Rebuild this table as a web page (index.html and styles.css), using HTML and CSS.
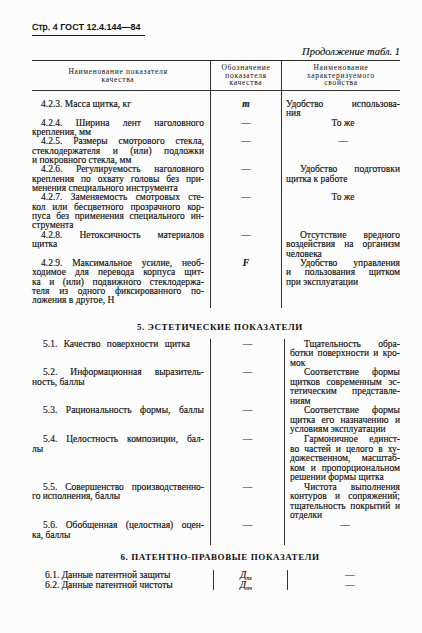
FILE: index.html
```html
<!DOCTYPE html>
<html lang="ru">
<head>
<meta charset="utf-8">
<title>ГОСТ 12.4.144—84, стр. 4</title>
<link rel="stylesheet" href="styles.css">
</head>
<body>
<div class="page">
  <div class="runhead"><span>Стр. 4</span> ГОСТ 12.4.144—84</div>
  <div class="cont">Продолжение табл. 1</div>

  <div class="thead">
    <div class="th th1"><span>Наименование показателя</span><span>качества</span></div>
    <div class="th th2"><span>Обозначение</span><span>показателя</span><span>качества</span></div>
    <div class="th th3"><span>Наименование</span><span>характеризуемого</span><span>свойства</span></div>
  </div>

  <div class="tbody s4">
    <div class="row">
      <div class="c1"><span class="l i">4.2.3. Масса щитка, кг</span></div>
      <div class="c2"><span class="l sym">m</span></div>
      <div class="c3"><span class="l j">Удобство использова-</span><span class="l">ния</span></div>
    </div>
    <div class="row">
      <div class="c1"><span class="l i j">4.2.4. Ширина лент наголовного</span><span class="l">крепления, мм</span></div>
      <div class="c2"><span class="l">—</span></div>
      <div class="c3"><span class="l ctr">То же</span></div>
    </div>
    <div class="row">
      <div class="c1"><span class="l i j">4.2.5. Размеры смотрового стекла,</span><span class="l j">стеклодержателя и (или) подложки</span><span class="l">и покровного стекла, мм</span></div>
      <div class="c2"><span class="l">—</span></div>
      <div class="c3"><span class="l ctr">—</span></div>
    </div>
    <div class="row">
      <div class="c1"><span class="l i j">4.2.6. Регулируемость наголовного</span><span class="l j">крепления по охвату головы без при-</span><span class="l">менения специального инструмента</span></div>
      <div class="c2"><span class="l">—</span></div>
      <div class="c3"><span class="l i3 j">Удобство подготовки</span><span class="l">щитка к работе</span></div>
    </div>
    <div class="row">
      <div class="c1"><span class="l i j">4.2.7. Заменяемость смотровых сте-</span><span class="l j">кол или бесцветного прозрачного кор-</span><span class="l j">пуса без применения специального ин-</span><span class="l">струмента</span></div>
      <div class="c2"><span class="l">—</span></div>
      <div class="c3"><span class="l ctr">То же</span></div>
    </div>
    <div class="row">
      <div class="c1"><span class="l i j">4.2.8. Нетоксичность материалов</span><span class="l">щитка</span></div>
      <div class="c2"><span class="l">—</span></div>
      <div class="c3"><span class="l i3 j">Отсутствие вредного</span><span class="l j">воздействия на организм</span><span class="l">человека</span></div>
    </div>
    <div class="row">
      <div class="c1"><span class="l i j">4.2.9. Максимальное усилие, необ-</span><span class="l j">ходимое для перевода корпуса щит-</span><span class="l j">ка и (или) подвижного стеклодержа-</span><span class="l j">теля из одного фиксированного по-</span><span class="l">ложения в другое, Н</span></div>
      <div class="c2"><span class="l sym">F</span></div>
      <div class="c3"><span class="l i3 j">Удобство управления</span><span class="l j">и пользования щитком</span><span class="l">при эксплуатации</span></div>
    </div>
  </div>

  <h2 class="sect s5h">5. ЭСТЕТИЧЕСКИЕ ПОКАЗАТЕЛИ</h2>

  <div class="tbody s5">
    <div class="row">
      <div class="c1"><span class="l i5 ws">5.1. Качество поверхности щитка</span></div>
      <div class="c2"><span class="l">—</span></div>
      <div class="c3"><span class="l i3 j">Тщательность обра-</span><span class="l j">ботки поверхности и кро-</span><span class="l">мок</span></div>
    </div>
    <div class="row">
      <div class="c1"><span class="l i5 j">5.2. Информационная выразитель-</span><span class="l">ность, баллы</span></div>
      <div class="c2"><span class="l">—</span></div>
      <div class="c3"><span class="l i3 j">Соответствие формы</span><span class="l j">щитков современным эс-</span><span class="l j">тетическим представле-</span><span class="l">ниям</span></div>
    </div>
    <div class="row">
      <div class="c1"><span class="l i5 j">5.3. Рациональность формы, баллы</span></div>
      <div class="c2"><span class="l">—</span></div>
      <div class="c3"><span class="l i3 j">Соответствие формы</span><span class="l j">щитка его назначению и</span><span class="l">условиям эксплуатации</span></div>
    </div>
    <div class="row">
      <div class="c1"><span class="l i5 j">5.4. Целостность композиции, бал-</span><span class="l">лы</span></div>
      <div class="c2"><span class="l">—</span></div>
      <div class="c3"><span class="l i3 j">Гармоничное единст-</span><span class="l j">во частей и целого в ху-</span><span class="l j">дожественном, масштаб-</span><span class="l j">ком и пропорциональном</span><span class="l">решении формы щитка</span></div>
    </div>
    <div class="row">
      <div class="c1"><span class="l i5 j">5.5. Совершенство производственно-</span><span class="l">го исполнения, баллы</span></div>
      <div class="c2"><span class="l">—</span></div>
      <div class="c3"><span class="l i3 j">Чистота выполнения</span><span class="l j">контуров и сопряжений;</span><span class="l j">тщательность покрытий и</span><span class="l">отделки</span></div>
    </div>
    <div class="row">
      <div class="c1"><span class="l i5 j">5.6. Обобщенная (целостная) оцен-</span><span class="l">ка, баллы</span></div>
      <div class="c2"><span class="l">—</span></div>
      <div class="c3"><span class="l ctr">—</span></div>
    </div>
  </div>

  <h2 class="sect s6h">6. ПАТЕНТНО-ПРАВОВЫЕ ПОКАЗАТЕЛИ</h2>

  <div class="tbody s6">
    <div class="row">
      <div class="c1"><span class="l i6">6.1. Данные патентной защиты</span></div>
      <div class="c2"><span class="l sym6">Д<sub>пз</sub></span></div>
      <div class="c3"><span class="l d6">—</span></div>
    </div>
    <div class="row">
      <div class="c1"><span class="l i6">6.2. Данные патентной чистоты</span></div>
      <div class="c2"><span class="l sym6">Д<sub>пч</sub></span></div>
      <div class="c3"><span class="l d6">—</span></div>
    </div>
  </div>
</div>
</body>
</html>
```

FILE: styles.css
```css
* { box-sizing: border-box; }
html, body { margin: 0; padding: 0; background: #fcfcfc; }
body {
  width: 422px;
  height: 633px;
  overflow: hidden;
  color: #111;
  font-family: "Liberation Serif", "Times New Roman", serif;
}
.page { padding: 16px 22px 0 32px; width: 422px; }

.runhead {
  display: inline-block;
  width: 113px;
  font-family: "Liberation Sans", Arial, sans-serif;
  font-weight: bold;
  font-size: 9px;
  line-height: 11px;
  padding-bottom: 2px;
  border-bottom: 1.5px solid #222;
  white-space: nowrap;
}
.runhead span { font-weight: normal; -webkit-text-stroke: 0.3px #111; }

.cont {
  margin-top: 10px;
  text-align: right;
  font-style: italic;
  font-size: 10.5px;
  line-height: 12px;
  -webkit-text-stroke: 0.15px #111;
}

.thead {
  margin-top: 2px;
  display: grid;
  grid-template-columns: 178px 72px 118px;
  height: 31px;
  border-top: 1.5px solid #2a2a2a;
  border-bottom: 1px solid #333;
}
.th {
  display: flex;
  flex-direction: column;
  justify-content: center;
  align-items: center;
  font-size: 7.5px;
  line-height: 7.5px;
  letter-spacing: 0.7px;
}
.th1 { padding-right: 6px; }
.th2 { border-left: 1px solid #333; border-right: 1px solid #333; }

.tbody {
  font-size: 9.5px;
  width: 368px;
  -webkit-text-stroke: 0.15px #111;
}
.s4 {
  padding: 9px 0 2px;
  background:
    linear-gradient(#333, #333) 178px 0 / 1px 100% no-repeat,
    linear-gradient(#333, #333) 249px 0 / 1px 100% no-repeat;
}
.s5 {
  padding: 1px 0 5px;
  background:
    linear-gradient(#333, #333) 178px 0 / 1px 100% no-repeat,
    linear-gradient(#333, #333) 252px 0 / 1px 100% no-repeat;
}
.s5 .row { grid-template-columns: 178px 75px 115px; }
.s5 .c3 { padding-left: 5px; }
.s5 .l { height: 9.55px; line-height: 9.55px; }
.s6 {
  background:
    linear-gradient(#333, #333) 181px 0 / 1px 100% no-repeat,
    linear-gradient(#333, #333) 255px 0 / 1px 100% no-repeat;
}

.row {
  display: grid;
  grid-template-columns: 178px 72px 118px;
}
.c1 { padding-right: 6px; }
.c2 { text-align: center; }
.c3 { padding-left: 4px; }

.l {
  display: block;
  height: 9.35px;
  line-height: 9.35px;
  white-space: nowrap;
}
.j { text-align: justify; text-align-last: justify; white-space: normal; }
.ws { word-spacing: 4px; }
.ctr { text-align: center; }
.i { padding-left: 9px; }
.i5 { padding-left: 11px; }
.i3 { padding-left: 14px; }
.sym { font-style: italic; font-weight: bold; }

.sect {
  margin: 0;
  padding-left: 8px;
  text-align: center;
  font-size: 9px;
  line-height: 10px;
  font-weight: bold;
  letter-spacing: 0.6px;
  width: 368px;
}
.s5h { margin-top: 14px; margin-bottom: 7px; }
.s6h { margin-top: 7px; margin-bottom: 8px; }

.s6 .l { height: 10px; line-height: 10px; }
.i6 { padding-left: 13px; }
.sym6 { font-style: italic; }
.sym6 sub { font-size: 6px; vertical-align: -1.5px; line-height: 0; }
.d6 { text-align: center; padding-left: 14px; }
```
